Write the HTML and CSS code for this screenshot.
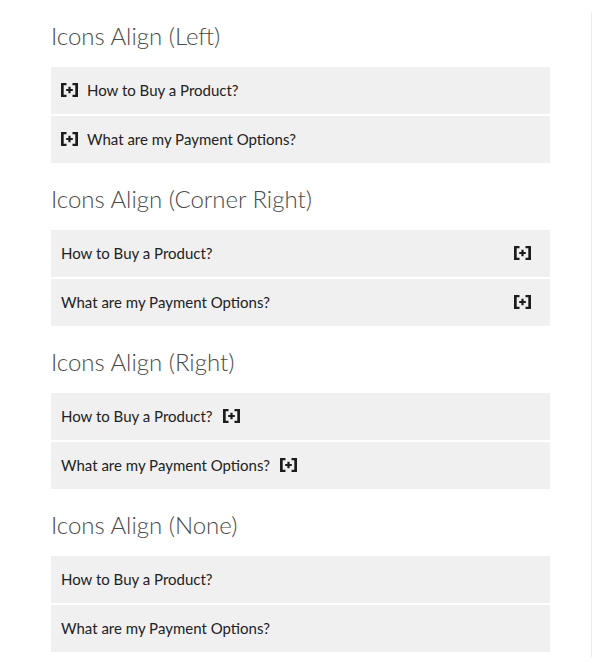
FILE: index.html
```html
<!DOCTYPE html>
<html>
<head>
<meta charset="utf-8">
<link rel="stylesheet" href="styles.css">
</head>
<body>
<div class="page">
  <div class="content">
    <section class="sec">
      <h2 class="title">Icons Align (Left)</h2>
      <div class="row icon-left"><span class="ico"><svg width="17" height="14" viewBox="0 0 17 14"><path d="M0 0h5.5v2.2H2.7v9.6h2.8V14H0z M17 0h-5.5v2.2h2.8v9.6h-2.8V14H17z M7.4 3.7h2.2v2.2h2.2v2.2H9.6v2.2H7.4V8.1H5.2V5.9h2.2z"/></svg></span><span class="q">How to Buy a Product?</span></div>
      <div class="row icon-left"><span class="ico"><svg width="17" height="14" viewBox="0 0 17 14"><path d="M0 0h5.5v2.2H2.7v9.6h2.8V14H0z M17 0h-5.5v2.2h2.8v9.6h-2.8V14H17z M7.4 3.7h2.2v2.2h2.2v2.2H9.6v2.2H7.4V8.1H5.2V5.9h2.2z"/></svg></span><span class="q">What are my Payment Options?</span></div>
    </section>
    <section class="sec">
      <h2 class="title">Icons Align (Corner Right)</h2>
      <div class="row icon-corner"><span class="q">How to Buy a Product?</span><span class="ico"><svg width="17" height="14" viewBox="0 0 17 14"><path d="M0 0h5.5v2.2H2.7v9.6h2.8V14H0z M17 0h-5.5v2.2h2.8v9.6h-2.8V14H17z M7.4 3.7h2.2v2.2h2.2v2.2H9.6v2.2H7.4V8.1H5.2V5.9h2.2z"/></svg></span></div>
      <div class="row icon-corner"><span class="q">What are my Payment Options?</span><span class="ico"><svg width="17" height="14" viewBox="0 0 17 14"><path d="M0 0h5.5v2.2H2.7v9.6h2.8V14H0z M17 0h-5.5v2.2h2.8v9.6h-2.8V14H17z M7.4 3.7h2.2v2.2h2.2v2.2H9.6v2.2H7.4V8.1H5.2V5.9h2.2z"/></svg></span></div>
    </section>
    <section class="sec">
      <h2 class="title">Icons Align (Right)</h2>
      <div class="row icon-right"><span class="q">How to Buy a Product?</span><span class="ico"><svg width="17" height="14" viewBox="0 0 17 14"><path d="M0 0h5.5v2.2H2.7v9.6h2.8V14H0z M17 0h-5.5v2.2h2.8v9.6h-2.8V14H17z M7.4 3.7h2.2v2.2h2.2v2.2H9.6v2.2H7.4V8.1H5.2V5.9h2.2z"/></svg></span></div>
      <div class="row icon-right"><span class="q">What are my Payment Options?</span><span class="ico"><svg width="17" height="14" viewBox="0 0 17 14"><path d="M0 0h5.5v2.2H2.7v9.6h2.8V14H0z M17 0h-5.5v2.2h2.8v9.6h-2.8V14H17z M7.4 3.7h2.2v2.2h2.2v2.2H9.6v2.2H7.4V8.1H5.2V5.9h2.2z"/></svg></span></div>
    </section>
    <section class="sec">
      <h2 class="title">Icons Align (None)</h2>
      <div class="row"><span class="q">How to Buy a Product?</span></div>
      <div class="row"><span class="q">What are my Payment Options?</span></div>
    </section>
  </div>
</div>
</body>
</html>
```
FILE: styles.css
```css
html, body {
  margin: 0;
  padding: 0;
  background: #fff;
}
body {
  font-family: Lato, "Liberation Sans", sans-serif;
  color: #222;
}
.page {
  position: relative;
  width: 592px;
  padding-bottom: 5px;
}
.page::after {
  content: "";
  position: absolute;
  right: 0;
  top: 12px;
  bottom: 0;
  width: 1px;
  background: #ececec;
}
.content {
  width: 499px;
  margin-left: 51px;
}
.title {
  margin: 0;
  padding-top: 21px;
  margin-bottom: 16px;
  font-size: 24px;
  line-height: 30px;
  font-weight: 300;
  color: #4a4a4a;
}
.row {
  display: flex;
  align-items: center;
  height: 47px;
  background: #f0f0f0;
  margin-bottom: 2px;
  padding: 0 10px 1px;
  box-sizing: border-box;
  font-size: 15px;
  color: #222;
}
.row:last-child {
  margin-bottom: 0;
}
.ico {
  display: flex;
  align-items: center;
}
.ico svg {
  fill: #1c1c1c;
  display: block;
}
.icon-left .ico {
  margin-right: 9px;
}
.icon-corner {
  justify-content: space-between;
  padding-right: 19px;
}
.icon-right .ico {
  margin-left: 10px;
}
```
